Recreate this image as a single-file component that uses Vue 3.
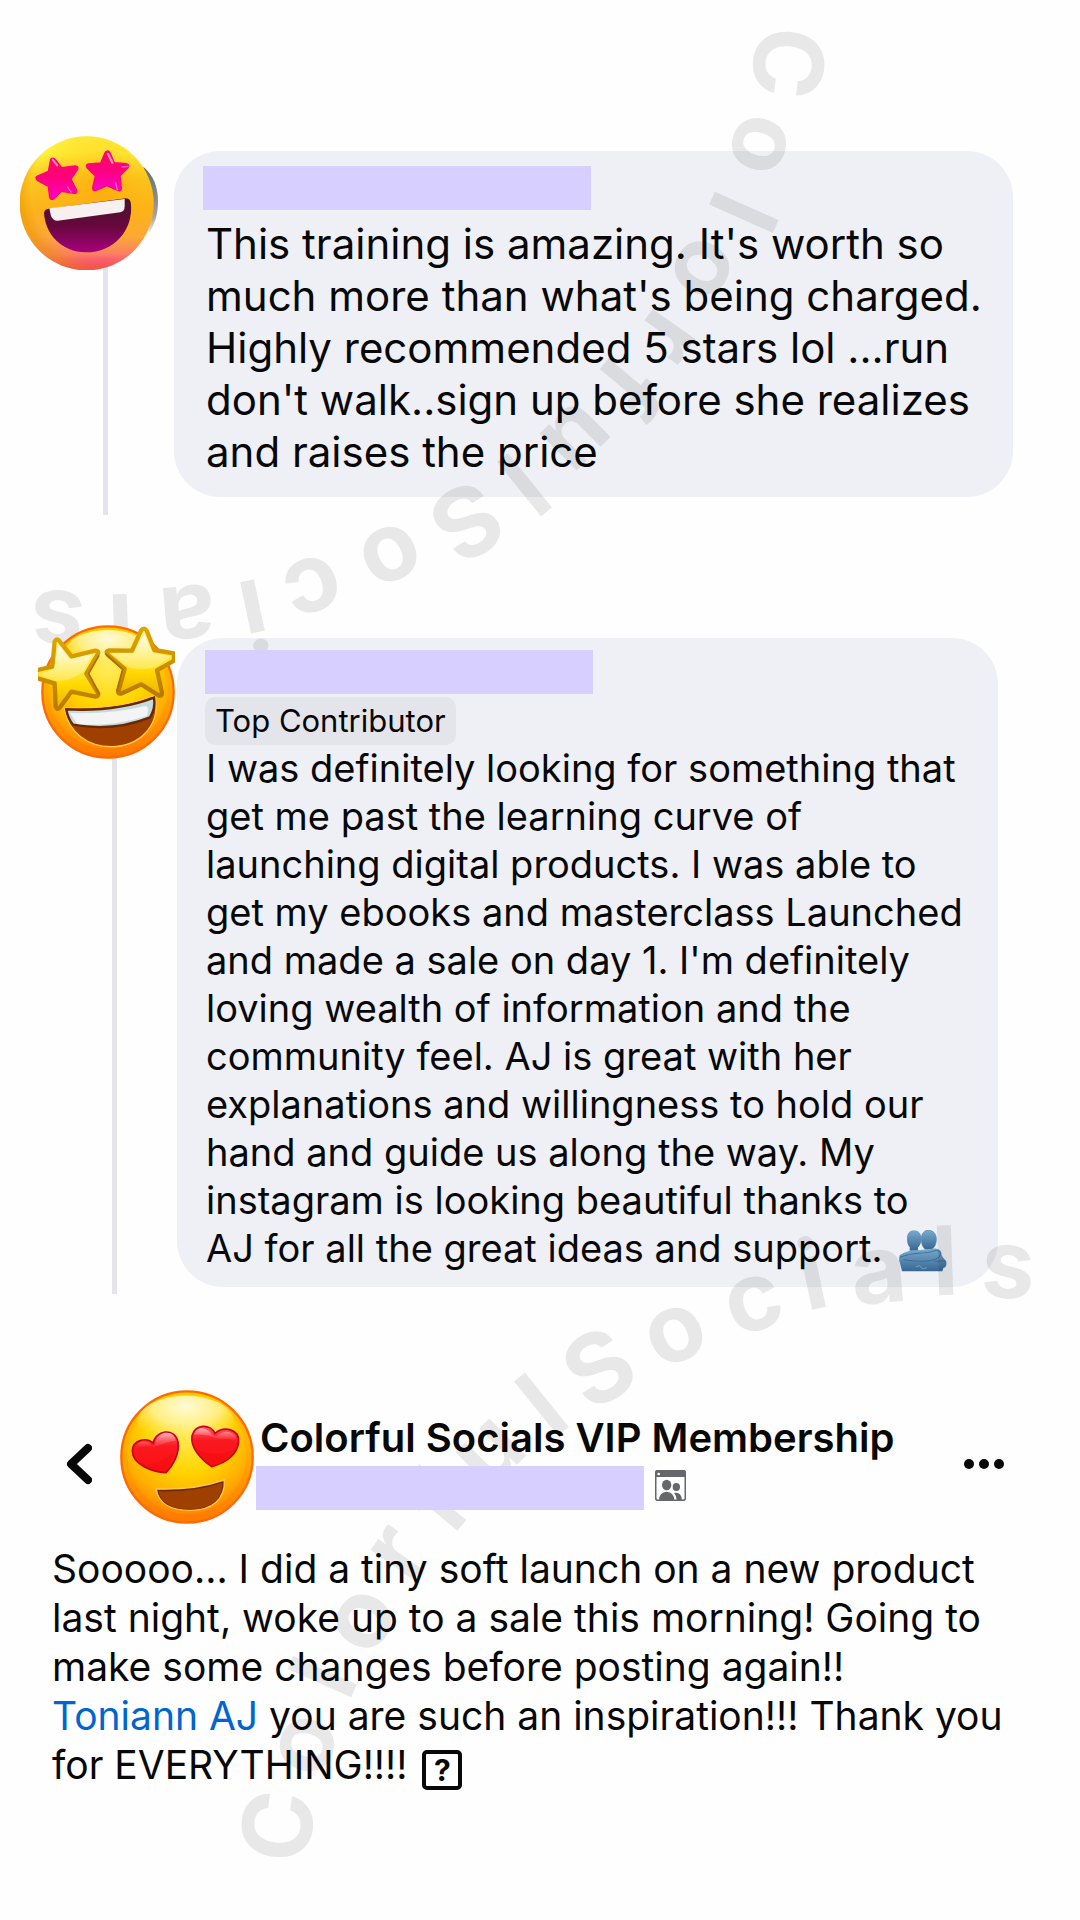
<template>
  <main class="page">
    <!-- Curved watermark, drawn once and then turned around for the lower half -->
    <svg class="watermark" viewBox="0 0 1080 1920" aria-hidden="true">
      <g v-for="turn in watermarkTurns" :key="turn" :transform="turn">
        <text
          v-for="(letter, i) in watermark"
          :key="i"
          :transform="`translate(${letter.x} ${letter.y}) rotate(${letter.angle})`"
          :y="letter.tall ? 34 : 26"
        >{{ letter.char }}</text>
      </g>
    </svg>

    <!-- First comment -->
    <article class="comment">
      <div class="rail">
        <svg class="avatar avatar-pink" viewBox="60 48 414 402" role="img" aria-label="Star eyes">
          <defs>
            <linearGradient id="pinkFace" x1="0" y1="0" x2="0" y2="1">
              <stop offset="0" stop-color="#fff040" />
              <stop offset="0.12" stop-color="#fff43c" />
              <stop offset="0.32" stop-color="#fcc822" />
              <stop offset="0.55" stop-color="#fcb41c" />
              <stop offset="0.75" stop-color="#fda83c" />
              <stop offset="0.88" stop-color="#fb7c68" />
              <stop offset="1" stop-color="#f81c84" />
            </linearGradient>
            <radialGradient id="pinkShade" cx="0.6" cy="0.4" r="0.6">
              <stop offset="0" stop-color="#ff9c00" stop-opacity="0.5" />
              <stop offset="0.6" stop-color="#ffab00" stop-opacity="0.2" />
              <stop offset="0.85" stop-color="#f0a000" stop-opacity="0" />
              <stop offset="1" stop-color="#e89400" stop-opacity="0.5" />
            </radialGradient>
            <linearGradient id="pinkStar" x1="0" y1="0" x2="0" y2="1">
              <stop offset="0" stop-color="#ff0a5c" />
              <stop offset="0.5" stop-color="#ff0080" />
              <stop offset="1" stop-color="#ff00c8" />
            </linearGradient>
            <linearGradient id="pinkMouth" x1="0" y1="0" x2="0" y2="1">
              <stop offset="0" stop-color="#4c1428" />
              <stop offset="0.5" stop-color="#64083c" />
              <stop offset="1" stop-color="#a8007c" />
            </linearGradient>
            <linearGradient id="photoEdge" x1="0" y1="0" x2="0" y2="1">
              <stop offset="0" stop-color="#5c7468" />
              <stop offset="0.5" stop-color="#8c8c8a" />
              <stop offset="0.75" stop-color="#a4a4a2" />
              <stop offset="1" stop-color="#ececec" />
            </linearGradient>
          </defs>
          <path d="M430 140C460 165 474 200 474 245C474 280 466 310 446 340Z" fill="url(#photoEdge)" />
          <circle cx="260" cy="250" r="201" fill="url(#pinkFace)" />
          <circle cx="260" cy="250" r="201" fill="url(#pinkShade)" />
          <g fill="url(#pinkStar)" stroke="#ff0080" stroke-width="4" stroke-linejoin="round">
            <path d="M152 118Q160 110 167 120L185 143L226 138Q236 139 233 148L213 177L230 211Q232 221 222 220L184 214L162 236Q152 242 149 232L145 199L112 181Q104 174 112 168L145 154Z" />
            <path d="M315 98Q323 88 330 98L343 128L379 131Q391 135 384 143L360 167L364 206Q362 215 353 211L321 197L288 211Q277 214 278 203L286 168L261 143Q256 134 266 132L302 129Z" />
          </g>
          <path d="M158 119L172 136" stroke="#ff8cb0" stroke-width="6" stroke-linecap="round" />
          <path d="M324 102L337 128" stroke="#ff90b4" stroke-width="7" stroke-linecap="round" />
          <path d="M352 210L347 188M213 216L203 201M384 139L366 141" stroke="#ff60c8" stroke-width="4" stroke-linecap="round" />
          <path d="M132 280Q132 268 146 266L378 235Q392 235 393 254C399 330 343 397 258 397C184 397 136 342 132 280Z" fill="url(#pinkMouth)" />
          <path d="M148 265L374 237V259Q374 274 361 277L173 302Q160 303 153 288Z" fill="#f8f0f0" />
        </svg>
        <span class="thread"></span>
      </div>
      <section class="bubble">
        <div class="name-mask"></div>
        <p class="body-large">
          <span v-for="line in firstComment" :key="line">{{ line }}</span>
        </p>
      </section>
    </article>

    <!-- Second comment -->
    <article class="comment comment-second">
      <div class="rail">
        <svg class="avatar avatar-gold" viewBox="114 195 411 402" role="img" aria-label="Star eyes">
          <defs>
            <radialGradient id="goldFace" cx="0.5" cy="0.3" r="0.7">
              <stop offset="0" stop-color="#ffee60" />
              <stop offset="0.5" stop-color="#ffd400" />
              <stop offset="0.8" stop-color="#ffb000" />
              <stop offset="1" stop-color="#ff8800" />
            </radialGradient>
            <linearGradient id="goldRing" x1="0" y1="0" x2="0" y2="1">
              <stop offset="0" stop-color="#ffcc00" />
              <stop offset="0.5" stop-color="#ffa800" />
              <stop offset="1" stop-color="#ff7800" />
            </linearGradient>
            <radialGradient id="gloss" cx="0.5" cy="0.2" r="0.7">
              <stop offset="0" stop-color="#fffbd8" />
              <stop offset="0.5" stop-color="#fff4a0" stop-opacity="0.8" />
              <stop offset="1" stop-color="#ffe040" stop-opacity="0" />
            </radialGradient>
            <linearGradient id="goldStar" x1="0" y1="0" x2="0" y2="1">
              <stop offset="0" stop-color="#fff6a0" />
              <stop offset="0.45" stop-color="#ffe63c" />
              <stop offset="0.65" stop-color="#ffd900" />
              <stop offset="1" stop-color="#eeb000" />
            </linearGradient>
            <linearGradient id="goldEdge" x1="0" y1="0" x2="0" y2="1">
              <stop offset="0" stop-color="#dca600" />
              <stop offset="0.5" stop-color="#cc9200" />
              <stop offset="1" stop-color="#b87a00" />
            </linearGradient>
            <linearGradient id="starGloss" x1="0" y1="0" x2="0" y2="1">
              <stop offset="0" stop-color="#ffffff" stop-opacity="0.9" />
              <stop offset="1" stop-color="#fff080" stop-opacity="0.5" />
            </linearGradient>
          </defs>
          <circle cx="324" cy="396" r="197" fill="url(#goldRing)" stroke="#ff6a00" stroke-width="7" />
          <circle cx="324" cy="388" r="179" fill="url(#goldFace)" />
          <ellipse cx="324" cy="275" rx="128" ry="65" fill="url(#gloss)" />
          <g fill="url(#goldStar)" stroke="url(#goldEdge)" stroke-width="13" stroke-linejoin="round">
            <path d="M164 244Q171 233 179 244L215 289L286 272Q299 272 293 283L259 341L294 399Q297 412 283 409L214 395L180 442Q171 452 167 440L164 370L108 354V331L157 320Z" />
            <path d="M423 212Q432 200 440 212L463 270L522 280V302L471 331L486 398Q486 411 474 405L424 373L366 400Q351 403 356 391L374 327L324 285Q314 273 328 271L396 272Z" />
          </g>
          <path d="M297 286L266 341L299 404" fill="none" stroke="#a86c00" stroke-width="5" stroke-linejoin="round" />
          <path d="M316 281L368 328L350 394" fill="none" stroke="#a86c00" stroke-width="5" stroke-linejoin="round" />
          <path d="M175 255L210 298L275 283L251 335Q200 370 157 361L118 344L162 328Z" fill="url(#starGloss)" />
          <path d="M432 222L457 279L512 290L467 322Q410 337 372 314L336 280L401 280Z" fill="url(#starGloss)" />
          <path d="M194 449Q190 442 203 443Q360 449 454 409Q468 408 468 425C474 499 420 558 334 560C262 560 207 518 194 449Z" fill="#a04000" stroke="#ffc850" stroke-width="4" />
          <path d="M199 448Q350 456 462 413Q467 445 450 472Q340 516 219 494Q203 474 199 448Z" fill="#c4dce0" stroke="#6a2800" stroke-width="7" />
          <path d="M210 459Q340 463 435 438Q446 438 444 452L441 468Q330 502 231 492Z" fill="#f4f4f4" />
        </svg>
        <span class="thread"></span>
      </div>
      <section class="bubble">
        <div class="name-mask"></div>
        <span class="badge">Top Contributor</span>
        <p class="body-medium">
          <span v-for="(line, i) in secondComment" :key="line">{{ line }}
            <svg v-if="i === secondComment.length - 1" class="hug" viewBox="180 150 144 126" role="img" aria-label="People hugging">
              <defs>
                <linearGradient id="hugFill" x1="0" y1="0" x2="0" y2="1">
                  <stop offset="0" stop-color="#78abd0" />
                  <stop offset="0.5" stop-color="#5889b0" />
                  <stop offset="1" stop-color="#386694" />
                </linearGradient>
              </defs>
              <path d="M204 176C204 160 212 151 225 151C238 151 247 160 247 176C247 190 241 199 237 202V212H212V201C207 196 204 188 204 176Z" fill="url(#hugFill)" />
              <path d="M247 177C247 160 256 151 268 151C282 151 292 161 292 178C292 193 286 204 278 208H258C250 201 247 190 247 177Z" fill="url(#hugFill)" stroke="#5183ac" stroke-width="2" />
              <path d="M182 226Q205 210 236 211L273 207Q300 202 307 216Q306 229 321 242Q326 260 313 264L310 274H189L180 239Z" fill="url(#hugFill)" />
              <path d="M182 232C220 216 265 221 281 214C298 207 310 215 301 231C272 251 226 243 193 239M284 243C301 246 318 238 319 248" fill="none" stroke="#3d6d99" stroke-width="3" />
              <path d="M184 226Q215 214 265 215L290 207M231 260L242 257L250 267L263 263" fill="none" stroke="#6fa3c8" stroke-width="3" />
            </svg>
          </span>
        </p>
      </section>
    </article>

    <!-- Group post -->
    <article class="post">
      <header class="post-header">
        <button class="back" type="button" aria-label="Back">
          <svg viewBox="0 0 26 42"><path d="M22 5L5 21L22 37" /></svg>
        </button>
        <svg class="avatar-heart" viewBox="239 60 402 402" role="img" aria-label="Heart eyes">
          <defs>
            <linearGradient id="heartFill" x1="0" y1="0" x2="0" y2="1">
              <stop offset="0" stop-color="#ff5a68" />
              <stop offset="0.35" stop-color="#fa1820" />
              <stop offset="1" stop-color="#ff1010" />
            </linearGradient>
            <linearGradient id="heartGloss" x1="0" y1="0" x2="0" y2="1">
              <stop offset="0" stop-color="#ffb4b8" />
              <stop offset="1" stop-color="#ff4850" stop-opacity="0.1" />
            </linearGradient>
          </defs>
          <circle cx="440" cy="261" r="197" fill="url(#goldRing)" stroke="#ff6a00" stroke-width="7" />
          <circle cx="440" cy="253" r="179" fill="url(#goldFace)" />
          <ellipse cx="436" cy="155" rx="145" ry="78" fill="url(#gloss)" />
          <path d="M377 308C336 306 277 284 276 243C276 211 316 200 339 219C343 183 403 169 413 216C419 251 397 288 377 308Z" fill="url(#heartFill)" stroke="#c80020" stroke-width="5" />
          <path d="M514 290C483 269 449 233 455 198C464 161 511 161 524 190C550 166 598 178 595 216C590 260 546 281 514 290Z" fill="url(#heartFill)" stroke="#c80020" stroke-width="5" />
          <path d="M282 236C287 215 318 205 337 228C349 225 342 199 371 189C394 186 404 197 406 212C390 211 360 226 340 231C318 226 300 232 282 236Z" fill="url(#heartGloss)" />
          <path d="M461 194C468 170 496 167 516 194C529 207 537 183 561 185C583 188 591 204 588 215C570 202 549 210 524 204C504 195 483 193 461 194Z" fill="url(#heartGloss)" />
          <path d="M284 273Q333 301 399 250Q392 278 375 302Q312 298 284 273ZM463 235Q525 268 588 234Q565 272 515 284Q480 260 463 235Z" fill="#e60c0c" opacity="0.35" />
          <path d="M348 357Q460 361 552 330C555 388 514 421 450 421C391 421 354 400 348 357Z" fill="#6a2800" stroke="#ffc850" stroke-width="4" />
          <path d="M355 364Q462 367 546 338C548 388 510 418 450 418C396 418 361 400 355 364Z" fill="#a04000" />
        </svg>
        <div class="post-heading">
          <h1>Colorful Socials VIP Membership</h1>
          <div class="post-meta">
            <div class="name-mask"></div>
            <svg class="group-icon" viewBox="1244 238 93 93" role="img" aria-label="Group members">
              <rect x="1246" y="240" width="89" height="89" rx="7" fill="#fff" stroke="#66676b" stroke-width="5" />
              <path d="M1245 259V246Q1245 239 1252 239H1329Q1336 239 1336 246V259Z" fill="#66676b" />
              <circle cx="1255" cy="250" r="4" fill="#fff" />
              <g fill="#66676b">
                <ellipse cx="1279" cy="283" rx="14" ry="16" />
                <ellipse cx="1308" cy="289" rx="11" ry="12" />
                <path d="M1256 328Q1257 304 1279 303Q1300 304 1302 328ZM1301 307Q1323 303 1325 328H1309Q1309 315 1301 307Z" />
              </g>
            </svg>
          </div>
        </div>
        <button class="more" type="button" aria-label="More options">
          <svg viewBox="0 0 42 12">
            <circle cx="6" cy="6" r="5" />
            <circle cx="21" cy="6" r="5" />
            <circle cx="36" cy="6" r="5" />
          </svg>
        </button>
      </header>
      <p class="post-body">
        <span>Sooooo... I did a tiny soft launch on a new product</span>
        <span>last night, woke up to a sale this morning! Going to</span>
        <span>make some changes before posting again!!</span>
        <span><a href="#">Toniann AJ</a> you are such an inspiration!!! Thank you</span>
        <span>for EVERYTHING!!!! <b class="unknown">?</b></span>
      </p>
    </article>
  </main>
</template>

<script setup>
const firstComment = [
  "This training is amazing. It's worth so",
  "much more than what's being charged.",
  'Highly recommended 5 stars lol ...run',
  "don't walk..sign up before she realizes",
  'and raises the price'
]

const secondComment = [
  'I was definitely looking for something that',
  'get me past the learning curve of',
  'launching digital products. I was able to',
  'get my ebooks and masterclass Launched',
  "and made a sale on day 1. I'm definitely",
  'loving wealth of information and the',
  'community feel. AJ is great with her',
  'explanations and willingness to hold our',
  'hand and guide us along the way. My',
  'instagram is looking beautiful thanks to',
  'AJ for all the great ideas and support.'
]

// Centre of each letter along the curve
const watermark = [
  { char: 'C', x: 788, y: 63, angle: 97, tall: true },
  { char: 'o', x: 759, y: 144, angle: 107 },
  { char: 'l', x: 743, y: 212, angle: 114, tall: true },
  { char: 'o', x: 702, y: 268, angle: 120 },
  { char: 'r', x: 666, y: 335, angle: 125 },
  { char: 'f', x: 629, y: 387, angle: 130, tall: true },
  { char: 'u', x: 575, y: 435, angle: 135 },
  { char: 'l', x: 524, y: 484, angle: 141, tall: true },
  { char: 'S', x: 467, y: 521, angle: 148, tall: true },
  { char: 'o', x: 390, y: 554, angle: 155 },
  { char: 'c', x: 312, y: 585, angle: 162 },
  { char: 'i', x: 254, y: 614, angle: 168, tall: true },
  { char: 'a', x: 187, y: 612, angle: 175 },
  { char: 'l', x: 121, y: 628, angle: 178, tall: true },
  { char: 's', x: 58, y: 617, angle: 183 }
]

const watermarkTurns = ['rotate(0)', 'translate(1066 1889) rotate(180)']
</script>

<style>
  body {
    margin: 0;
    background: #fefefe;
  }
</style>

<style scoped>
  .page {
    position: relative;
    box-sizing: border-box;
    min-height: 100vh;
    padding: 136px 0 100px;
    overflow: hidden;
    font-family: Inter, "Liberation Sans", sans-serif;
    color: #080809;
  }

  .watermark {
    position: absolute;
    top: 0;
    left: 0;
    z-index: 1;
    width: 100%;
    pointer-events: none;
  }

  .watermark text {
    font-size: 96px;
    font-weight: 700;
    text-anchor: middle;
    fill: #000;
    fill-opacity: 0.085;
  }

  .comment {
    display: flex;
    align-items: stretch;
    padding: 0 67px 0 20px;
  }

  .comment-second {
    margin-top: 110px;
    padding: 0 82px 0 38px;
  }

  .rail {
    display: flex;
    flex: none;
    flex-direction: column;
    width: 154px;
  }

  .comment-second .rail {
    width: 139px;
  }

  .avatar {
    position: relative;
    z-index: 2;
    flex: none;
    height: 134px;
  }

  .avatar-pink {
    width: 138px;
  }

  .avatar-gold {
    width: 137px;
  }

  .thread {
    flex: 1;
    width: 5px;
    margin: -4px 0 0 83px;
    background: #e4e4ea;
  }

  .comment-second .thread {
    margin-left: 74px;
  }

  .bubble {
    flex: 1;
    min-width: 0;
    margin: 15px 0 18px;
    padding: 15px 0 19px 29px;
    border-radius: 46px;
    background: #eff0f5;
  }

  .comment-second .bubble {
    margin: 13px 0 7px;
    padding: 12px 0 15px 28px;
  }

  .name-mask {
    position: relative;
    z-index: 2;
    width: 388px;
    height: 44px;
    background: #d6cfff;
  }

  .badge {
    display: block;
    width: fit-content;
    margin-top: 3px;
    padding: 0 10px;
    border-radius: 10px;
    background: #e4e5ea;
    font-size: 31px;
    line-height: 48px;
  }

  p {
    margin: 0;
    white-space: nowrap;
  }

  p > span {
    display: block;
  }

  .body-large {
    margin-top: 8px;
    padding-left: 3px;
    font-size: 42px;
    line-height: 52px;
  }

  .body-medium {
    margin-top: -1px;
    padding-left: 1px;
    font-size: 38px;
    line-height: 48px;
  }

  .hug {
    width: 48px;
    height: 42px;
    margin-left: 6px;
    vertical-align: -10px;
  }

  .post {
    margin-top: 96px;
    padding: 0 52px;
  }

  .post-header {
    display: flex;
    align-items: center;
  }

  button {
    display: flex;
    padding: 0;
    border: none;
    background: none;
    cursor: pointer;
  }

  .back {
    margin: 14px 28px 0 14px;
  }

  .back svg {
    width: 26px;
    height: 42px;
    fill: none;
    stroke: #080809;
    stroke-width: 8;
    stroke-linecap: round;
    stroke-linejoin: round;
  }

  .avatar-heart {
    position: relative;
    z-index: 2;
    flex: none;
    width: 134px;
    height: 134px;
  }

  .post-heading {
    flex: 1;
    margin: 8px 0 0 2px;
  }

  h1 {
    margin: 0 0 3px 4px;
    font-size: 40px;
    font-weight: 600;
    line-height: 51px;
    white-space: nowrap;
  }

  .post-meta {
    display: flex;
    align-items: center;
    gap: 11px;
  }

  .group-icon {
    width: 31px;
    height: 31px;
    margin-bottom: 6px;
  }

  .more {
    margin: 14px 23px 0 0;
  }

  .more svg {
    width: 42px;
    height: 12px;
    fill: #080809;
  }

  .post-body {
    margin-top: 20px;
    font-size: 39px;
    line-height: 49px;
  }

  a {
    color: #0064d1;
    text-decoration: none;
  }

  .unknown {
    display: inline-block;
    box-sizing: border-box;
    width: 40px;
    height: 40px;
    margin-left: 4px;
    border: 4px solid #080809;
    border-radius: 5px;
    font-size: 30px;
    line-height: 32px;
    text-align: center;
    vertical-align: -2px;
  }
</style>
